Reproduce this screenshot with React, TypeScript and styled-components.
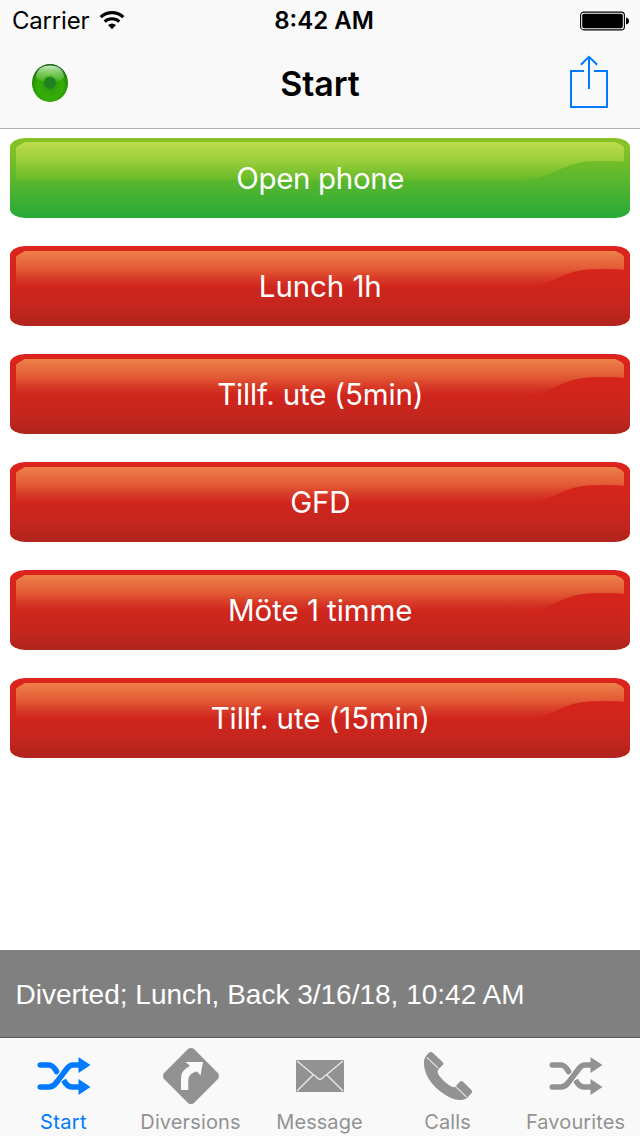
import React from "react";
import styled, { createGlobalStyle } from "styled-components";

const Global = createGlobalStyle`
  html, body { margin: 0; padding: 0; background: #fff; }
  *, *::before, *::after { box-sizing: border-box; }
`;

const Screen = styled.div`
  width: 640px;
  height: 1136px;
  display: flex;
  flex-direction: column;
  background: #fff;
  overflow: hidden;
  font-family: Inter, "Liberation Sans", sans-serif;
`;

const Header = styled.header`
  height: 129px;
  background: #f9f9f9;
  border-bottom: 1px solid #b2b2b2;
`;

const StatusBar = styled.div`
  height: 40px;
  display: grid;
  grid-template-columns: 1fr auto 1fr;
  align-items: center;
  padding: 0 11px 0 12px;
  color: #000;
`;

const Carrier = styled.div`
  display: flex;
  align-items: center;
  gap: 10px;
  font-size: 24px;
  line-height: 42px;
  letter-spacing: -0.2px;
`;

const Clock = styled.div`
  font-size: 24px;
  line-height: 42px;
  font-weight: 600;
  letter-spacing: 0;
  padding-left: 7px;
`;

const BatterySlot = styled.div`
  display: flex;
  justify-content: flex-end;
`;

const NavBar = styled.div`
  height: 88px;
  display: grid;
  grid-template-columns: 1fr auto 1fr;
  align-items: center;
  padding: 0 32px;
`;

const Title = styled.h1`
  margin: 0;
  font-size: 34px;
  line-height: 86px;
  font-weight: 600;
  letter-spacing: -0.1px;
`;

const NavAction = styled.button<{ $end?: boolean; $lift?: number }>`
  display: flex;
  justify-self: ${(p) => (p.$end ? "end" : "start")};
  padding: 0 0 ${(p) => p.$lift ?? 0}px;
  border: 0;
  background: none;
`;

const List = styled.main`
  flex: 1;
  display: flex;
  flex-direction: column;
  gap: 28px;
  padding: 9px 10px 0;
`;

const Tones = {
  green: {
    base: "linear-gradient(#86c226 0%, #84c126 14%, #5cb82d 50%, #28aa38 100%)",
    top: "#bbdc4d",
    mid: "#9bce3b",
    low: "#6fbc2a",
    end: 0.7,
    glossTop: 4,
    glossEnd: 42,
  },
  red: {
    base: "linear-gradient(#dc241c 0%, #d7241c 30%, #cf251d 53%, #c5261e 75%, #b0241c 100%)",
    top: "#ee8048",
    mid: "#e25a35",
    low: "#d0251d",
    end: 0.8,
    glossTop: 5,
    glossEnd: 41,
  },
};
type Tone = keyof typeof Tones;

const GlossyButton = styled.button<{ $tone: Tone }>`
  height: 80px;
  display: grid;
  padding: 0;
  border: 0;
  border-radius: 15px / 9px;
  overflow: hidden;
  background: ${(p) => Tones[p.$tone].base};
  color: #fff;
  font-family: inherit;
  > * { grid-area: 1 / 1; }
`;

const ButtonLabel = styled.span<{ $tracking: number }>`
  z-index: 1;
  font-size: 29.5px;
  font-weight: 400;
  line-height: 81px;
  letter-spacing: ${(p) => p.$tracking}px;
  padding-left: 0.5px;
  text-align: center;
`;

const Gloss = ({ tone }: { tone: Tone }) => {
  const t = Tones[tone];
  const a = t.glossTop;
  const b = t.glossEnd;
  return (
    <svg width="620" height="80" viewBox="0 0 620 80">
      <defs>
        <linearGradient id={`gloss-${tone}`} gradientUnits="userSpaceOnUse" x1="0" x2="0" y1={a} y2={b}>
          <stop offset="0" stopColor={t.top} />
          <stop offset="0.5" stopColor={t.mid} />
          <stop offset="1" stopColor={t.low} stopOpacity={t.end} />
        </linearGradient>
      </defs>
      <path
        fill={`url(#gloss-${tone})`}
        d={`M6 ${a + 6}Q7 ${a + 4} 15 ${a}H605Q613 ${a + 3} 614 ${a + 6}V23.8C606 23 598 23 588 23C548 23 546 ${b} 510 ${b}H6Z`}
      />
    </svg>
  );
};

const Notice = styled.div`
  height: 87px;
  padding-left: 15.5px;
  background: #808080;
  color: #fff;
  font-family: "Liberation Sans", Arial, sans-serif;
  font-size: 28px;
  line-height: 89px;
  letter-spacing: 0;
`;

const TabBar = styled.nav`
  height: 99px;
  display: grid;
  grid-template-columns: repeat(5, 1fr);
  background: #f9f9f9;
  border-top: 1px solid #59595a;
`;

const Tab = styled.div<{ $active?: boolean; $shift?: number }>`
  display: flex;
  flex-direction: column;
  align-items: center;
  padding-top: 9px;
  padding-right: ${(p) => p.$shift ?? 0}px;
  color: ${(p) => (p.$active ? "#007aff" : "#929292")};
`;

const TabLabel = styled.span<{ $tracking: number }>`
  font-size: 20px;
  font-weight: 400;
  line-height: 24px;
  margin-top: 5px;
  padding-right: 1px;
  letter-spacing: ${(p) => p.$tracking}px;
`;

const WifiIcon = () => (
  <svg width="26" height="20" viewBox="0 0 26 20" fill="none" stroke="#000">
    <path d="M1.7 6.2A16.2 16.2 0 0 1 24.3 6.2" strokeWidth="3.1" />
    <path d="M5.7 10.6A10.6 10.6 0 0 1 20.3 10.6" strokeWidth="3" />
    <path d="M13 18.2L9 14.1Q13 10.8 17 14.1Z" fill="#000" stroke="none" />
  </svg>
);

const BatteryIcon = () => (
  <svg width="49" height="20" viewBox="0 0 49 20">
    <rect x="0.6" y="1.1" width="43.8" height="17.8" rx="3.2" fill="none" stroke="#000" strokeWidth="1.1" />
    <rect x="2.2" y="2.7" width="40.6" height="14.6" rx="1.8" fill="#000" />
    <path d="M46 6.5Q49 7.3 49 10T46 13.5Z" fill="#000" />
  </svg>
);

const PresenceIcon = () => (
  <svg width="36" height="38" viewBox="0 0 36 38">
    <defs>
      <radialGradient id="orb" cx="0.5" cy="0.58" r="0.55">
        <stop offset="0" stopColor="#2f9d0e" />
        <stop offset="0.65" stopColor="#35ad04" />
        <stop offset="0.86" stopColor="#259407" />
        <stop offset="1" stopColor="#13640c" />
      </radialGradient>
      <linearGradient id="orb-shine" x1="0" x2="0" y1="0" y2="1">
        <stop offset="0" stopColor="#d0efc8" stopOpacity="0.95" />
        <stop offset="1" stopColor="#7fd05c" stopOpacity="0.25" />
      </linearGradient>
      <radialGradient id="orb-core">
        <stop offset="0" stopColor="#287d2b" />
        <stop offset="0.72" stopColor="#1f821f" />
        <stop offset="1" stopColor="#238b18" stopOpacity="0.2" />
      </radialGradient>
    </defs>
    <ellipse cx="18" cy="19" rx="18" ry="19" fill="url(#orb)" />
    <path d="M4 13C4 6 10 1.6 18 1.6S32 6 32 13C29 19.5 7 19.5 4 13Z" fill="url(#orb-shine)" />
    <circle cx="18" cy="19" r="7.2" fill="url(#orb-core)" />
  </svg>
);

const ShareIcon = () => (
  <svg width="38" height="54" viewBox="0 0 38 54" fill="none" stroke="#007aff" strokeWidth="2">
    <path d="M14 16H1V52H37V16H24" />
    <path d="M19 2V34M10.8 9.7L19 1.8L27.2 9.7" />
  </svg>
);

const ShuffleIcon = () => (
  <svg width="60" height="58" viewBox="0 0 60 58" fill="none" stroke="currentColor" strokeWidth="5.6">
    <path d="M6.3 18H15.5Q19 18.3 22.6 24.5" strokeLinecap="round" />
    <path d="M6.3 40H15Q19 40 22 36L33 21.5Q35.5 18 39 18H46" strokeLinecap="round" />
    <path d="M29.5 33Q33 40 38 40H46" />
    <path d="M44.5 10Q45 10.5 56.5 18L44.5 26ZM44.5 32L56.5 40L44.5 48Z" fill="currentColor" stroke="none" />
    <path d="M20.5 32.5L27 23.8" stroke="#f9f9f9" strokeWidth="0.8" />
    <path d="M27 35L32.5 27.8" stroke="#f9f9f9" strokeWidth="0.8" />
  </svg>
);

const DirectionIcon = () => (
  <svg width="58" height="58" viewBox="0 0 58 58">
    <path d="M26.5 1.6Q29 0.4 31.5 1.6L56.4 26.5Q57.6 29 56.4 31.5L31.5 56.4Q29 57.6 26.5 56.4L1.6 31.5Q0.4 29 1.6 26.5Z" fill="currentColor" />
    <path d="M19 43V31.5Q19.2 24.5 24 21.5L28 18.8L23.5 15H41L38.5 28.5L35 24.5C29 26 26.3 28.5 26.3 34V43Z" fill="#f9f9f9" />
  </svg>
);

const MailIcon = () => (
  <svg width="60" height="58" viewBox="0 0 60 58">
    <rect x="6" y="13" width="48" height="32" fill="currentColor" />
    <path d="M7 14L27.5 31Q30 33.5 32.5 31L53 14M7 44L23 28M53 44L37 28" fill="none" stroke="#e6e6e6" strokeWidth="1.5" />
  </svg>
);

const PhoneIcon = () => (
  <svg width="60" height="58" viewBox="0 0 60 58">
    <path d="M11 5.7Q13 4.4 15 6L25 15.5Q26 17 24.7 18L20.5 22Q18.8 25 21 28.5Q27.5 37 34.5 40Q37 40.6 38.5 38.5L42 34.5Q43.3 33.3 44.8 34.5L53.5 43Q54.7 44.8 53.5 46.2L49.5 50.5C45 54.5 37 53.4 31 50C19 43.5 7 32 6 17.5Q5.5 12 8 9Z" fill="currentColor" />
    <path d="M8.8 10.5L20 21M37 39L48.5 50" stroke="#e0e0e0" strokeWidth="1.1" />
  </svg>
);

const entries: { label: string; tone: Tone; tracking: number }[] = [
  { label: "Open phone", tone: "green", tracking: -0.35 },
  { label: "Lunch 1h", tone: "red", tracking: -0.1 },
  { label: "Tillf. ute (5min)", tone: "red", tracking: -0.15 },
  { label: "GFD", tone: "red", tracking: -0.3 },
  { label: "Möte 1 timme", tone: "red", tracking: -0.05 },
  { label: "Tillf. ute (15min)", tone: "red", tracking: -0.08 },
];

const tabs = [
  { label: "Start", Icon: ShuffleIcon, active: true, tracking: 0.4 },
  { label: "Diversions", Icon: DirectionIcon, shift: 2, tracking: 0.12 },
  { label: "Message", Icon: MailIcon, tracking: 0.05 },
  { label: "Calls", Icon: PhoneIcon, tracking: 0.1 },
  { label: "Favourites", Icon: ShuffleIcon, tracking: 0.1 },
];

export default function App() {
  return (
    <Screen>
      <Global />
      <Header>
        <StatusBar>
          <Carrier>
            Carrier
            <WifiIcon />
          </Carrier>
          <Clock>8:42 AM</Clock>
          <BatterySlot>
            <BatteryIcon />
          </BatterySlot>
        </StatusBar>
        <NavBar>
          <NavAction aria-label="Presence" $lift={2}>
            <PresenceIcon />
          </NavAction>
          <Title>Start</Title>
          <NavAction aria-label="Share" $end $lift={4}>
            <ShareIcon />
          </NavAction>
        </NavBar>
      </Header>
      <List>
        {entries.map((e) => (
          <GlossyButton key={e.label} $tone={e.tone}>
            <Gloss tone={e.tone} />
            <ButtonLabel $tracking={e.tracking}>{e.label}</ButtonLabel>
          </GlossyButton>
        ))}
      </List>
      <Notice>Diverted; Lunch, Back 3/16/18, 10:42 AM</Notice>
      <TabBar>
        {tabs.map(({ label, Icon, active, shift, tracking }) => (
          <Tab key={label} $active={active} $shift={shift}>
            <Icon />
            <TabLabel $tracking={tracking}>{label}</TabLabel>
          </Tab>
        ))}
      </TabBar>
    </Screen>
  );
}
